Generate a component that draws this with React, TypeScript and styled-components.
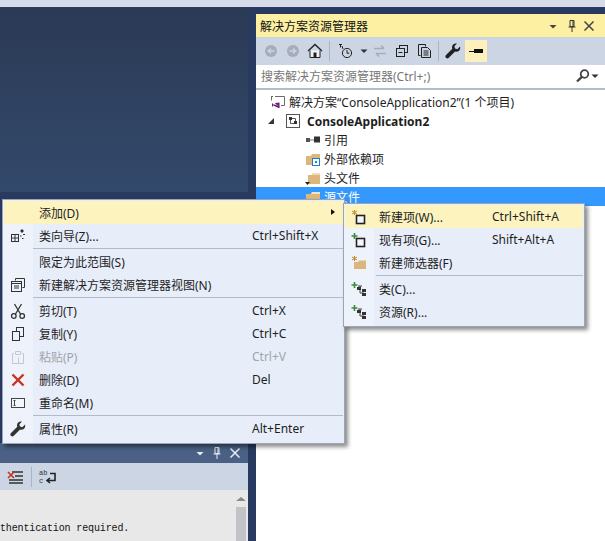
import React from "react";
import styled, { createGlobalStyle } from "styled-components";

const Global = createGlobalStyle`
  html, body { margin: 0; padding: 0; width: 605px; height: 541px; overflow: hidden; background: #2b3b60; }
  * { box-sizing: border-box; }
  #root { width: 605px; height: 541px; }
`;

const FONT = `"Noto Sans", "Noto Sans CJK SC", sans-serif`;

const Page = styled.div`
  position: relative;
  width: 605px;
  height: 541px;
  display: flex;
  flex-direction: column;
  font-family: ${FONT};
  font-size: 12px;
  color: #1e1e1e;
  overflow: hidden;
`;
const TopStrip = styled.div`
  height: 7px;
  flex: none;
  background: #d6dbe9;
`;
const Workspace = styled.div`
  flex: 1;
  display: flex;
  min-height: 0;
  background: #293a60;
`;
const LeftColumn = styled.div`
  width: 248px;
  margin-right: 8px;
  flex: none;
  display: flex;
  flex-direction: column;
`;
const DocArea = styled.div`
  height: 185px;
  flex: none;
  background: linear-gradient(#2b3a55, #33496b);
`;
const OutputPanel = styled.div`
  margin-top: 251px;
  flex: 1;
  display: flex;
  flex-direction: column;
  min-height: 0;
`;
const OutputTitle = styled.div`
  height: 20px;
  flex: none;
  background: #4a6185;
  display: flex;
  align-items: center;
  justify-content: flex-end;
  gap: 7px;
  padding-right: 7px;
`;
const OutputToolbar = styled.div`
  height: 27px;
  flex: none;
  background: #ccd5e4;
  display: flex;
  align-items: center;
  padding-left: 6px;
  gap: 4px;
`;
const OutputBody = styled.div`
  flex: 1;
  background: #e8e8e8;
  display: flex;
  justify-content: space-between;
  padding-top: 30px;
  position: relative;
`;
const Log = styled.pre`
  margin: 2px 0 0;
  font-family: "Liberation Mono", monospace;
  font-size: 10px;
  letter-spacing: -0.13px;
  line-height: 14px;
  color: #111;
`;
const ScrollTrack = styled.div`
  position: absolute;
  right: 0;
  top: 0;
  bottom: 0;
  width: 14px;
  display: flex;
  flex-direction: column;
  align-items: center;
  padding-top: 7px;
  gap: 6px;
`;
const ScrollUp = styled.div`
  width: 0;
  height: 0;
  border-left: 5px solid transparent;
  border-right: 5px solid transparent;
  border-bottom: 4px solid #8a8a8a;
`;
const ScrollThumb = styled.div`
  width: 10px;
  flex: 1;
  background: #c2c3c9;
`;
const Explorer = styled.div`
  flex: 1;
  display: flex;
  flex-direction: column;
  margin-top: 7px;
  background: #fff;
`;
const ExplorerTitle = styled.div`
  height: 23px;
  flex: none;
  background: #fdf0a3;
  display: flex;
  align-items: center;
  padding: 0 10px 0 4px;
  font-size: 12px;
  color: #111;
`;
const TitleText = styled.span`
  flex: 1;
`;
const TitleButtons = styled.div`
  display: flex;
  align-items: center;
  gap: 6px;
`;
const TitleCaret = styled.div`
  display: flex;
  margin-right: 3px;
`;
const ExplorerToolbar = styled.div`
  height: 28px;
  flex: none;
  background: #ccd5e4;
  display: flex;
  align-items: center;
  padding-left: 4px;
`;
const ToolButton = styled.div<{ $on?: boolean; $w?: number }>`
  width: ${(p) => p.$w ?? 22}px;
  height: 22px;
  flex: none;
  display: flex;
  align-items: center;
  justify-content: center;
  background: ${(p) => (p.$on ? "#fdf0bd" : "transparent")};
  margin-left: ${(p) => (p.$on ? 1 : 0)}px;
`;
const ToolSep = styled.div`
  width: 1px;
  height: 20px;
  flex: none;
  margin: 0 3px;
  background: #aab3c6;
`;
const SearchBox = styled.div`
  height: 25px;
  flex: none;
  background: #fff;
  border-bottom: 2px solid #b4bccf;
  display: flex;
  align-items: center;
  padding: 0 6px 2px 5px;
  color: #777;
  font-size: 12px;
`;
const SearchText = styled.span`
  flex: 1;
`;
const Tree = styled.div`
  padding-top: 2px;
  display: flex;
  flex-direction: column;
`;
const TreeRow = styled.div<{ $indent: number; $sel?: boolean; $bold?: boolean; $gap?: number }>`
  height: 19px;
  display: flex;
  align-items: center;
  gap: ${(p) => p.$gap ?? 3}px;
  padding-left: ${(p) => p.$indent}px;
  padding-top: ${(p) => (p.$bold ? 1 : 0)}px;
  background: ${(p) => (p.$sel ? "#3399ff" : "transparent")};
  color: ${(p) => (p.$sel ? "#fff" : "#1e1e1e")};
  font-weight: ${(p) => (p.$bold ? 700 : 400)};
  white-space: nowrap;
`;
const Expander = styled.div`
  width: 0;
  height: 0;
  margin-right: 5px;
  border-left: 6px solid transparent;
  border-bottom: 6px solid #333;
`;

const Menu = styled.div<{ $left: number; $top: number; $width: number }>`
  position: absolute;
  left: ${(p) => p.$left}px;
  top: ${(p) => p.$top}px;
  width: ${(p) => p.$width}px;
  background: linear-gradient(90deg, #eef2fb 30px, #e8edfa 30px);
  border: 1px solid #9aa5b8;
  padding: 1px 1px 3px;
  box-shadow: 3px 3px 4px rgba(0, 0, 0, 0.45);
  display: flex;
  flex-direction: column;
`;
const MenuRow = styled.div<{ $hot?: boolean; $off?: boolean; $col: number }>`
  position: relative;
  height: 23px;
  flex: none;
  display: grid;
  grid-template-columns: ${(p) => p.$col}px 1fr 91px;
  align-items: center;
  background: ${(p) => (p.$hot ? "#fdf3bf" : "transparent")};
  color: ${(p) => (p.$off ? "#a2a4a8" : "#1e1e1e")};
  white-space: nowrap;
`;
const MenuIcon = styled.div`
  display: flex;
  align-items: center;
  justify-content: center;
  width: 28px;
  height: 23px;
`;
const MenuSep = styled.div<{ $start: number }>`
  height: 1px;
  margin: 1px 0 1px ${(p) => p.$start}px;
  background: #b3bac8;
`;
const SubArrow = styled.div`
  position: absolute;
  right: 8px;
  top: 8px;
  width: 0;
  height: 0;
  border-top: 3.5px solid transparent;
  border-bottom: 3.5px solid transparent;
  border-left: 4px solid #111;
`;

const Svg = ({ children, w = 16, h = 16 }: { children: React.ReactNode; w?: number; h?: number }) => (
  <svg width={w} height={h} viewBox={`0 0 ${w} ${h}`} fill="none" style={{ flex: "none" }}>
    {children}
  </svg>
);

const PinDrop = ({ c }: { c: string }) => (
  <Svg w={10} h={10}><path d="M1.5 4h7L5 7.5z" fill={c} /></Svg>
);
const Pin = ({ c }: { c: string }) => (
  <Svg w={10} h={14}><path d="M3 1.5h4v6H3zM1.5 8h7M5 8v5M6 2v5" stroke={c} /></Svg>
);
const Close = ({ c }: { c: string }) => (
  <Svg w={12} h={12}><path d="M1.5 1.5l9 9M10.5 1.5l-9 9" stroke={c} strokeWidth="1.5" /></Svg>
);

const Nav = ({ dir }: { dir: 1 | -1 }) => (
  <Svg>
    <circle cx="8" cy="8" r="6" fill="#a6acb8" />
    <path d={dir < 0 ? "M11.5 8h-6M8 5.5L5.2 8 8 10.5" : "M4.5 8h6M8 5.5L10.8 8 8 10.5"} stroke="#ccd5e4" strokeWidth="1.4" />
  </Svg>
);
const Home = () => (
  <Svg>
    <path d="M1 8l7-6.5L15 8" stroke="#222" strokeWidth="1.4" />
    <path d="M3 7.5V14.5H13V7.5" fill="#f4f4f4" stroke="#222" />
    <rect x="6.5" y="9.5" width="3" height="5" fill="#222" />
  </Svg>
);
const History = () => (
  <Svg>
    <path d="M1 1.5h3M2.5 1.5v3" stroke="#222" />
    <path d="M4 3l1 3" stroke="#222" />
    <circle cx="9" cy="10" r="4.6" stroke="#222" />
    <path d="M9 7v3.2h2.4" stroke="#222" />
  </Svg>
);
const Caret = () => (
  <Svg w={8} h={8}><path d="M0.5 2.5h7L4 6z" fill="#333" /></Svg>
);
const Sync = () => (
  <Svg>
    <path d="M2 5.5h10M9 2.5l3 3M14 10.5H4M7 13.5l-3-3" stroke="#a6acb8" strokeWidth="1.5" />
  </Svg>
);
const Collapse = () => (
  <Svg>
    <rect x="5.5" y="2.5" width="8" height="7" stroke="#222" />
    <rect x="2.5" y="5.5" width="8" height="8" fill="#ccd5e4" stroke="#222" />
    <path d="M4.5 9.5h4" stroke="#222" />
  </Svg>
);
const Pages = () => (
  <Svg>
    <path d="M2.5 1.5h7v2M2.5 1.5v11h2" stroke="#222" />
    <path d="M5.5 4.5h6l3 3v7h-9z" fill="#ccd5e4" stroke="#222" />
    <path d="M7.5 8h5M7.5 10h5M7.5 12h5" stroke="#222" />
  </Svg>
);
const Wrench = ({ c = "#222" }: { c?: string }) => (
  <Svg>
    <path d="M15 3.6l-2.6 2.6-2.4-.6-.6-2.4L12 .6C9.6-.2 7 1.6 7 4.2c0 .6.1 1 .3 1.5L1 12c-.9.9-.9 2 0 2.8.8.9 2 .8 2.8 0l6.3-6.3c3 1 6-1.6 4.9-4.9z" fill={c} />
  </Svg>
);
const PinFlat = () => (
  <Svg>
    <path d="M1 8.5h5" stroke="#111" />
    <rect x="6" y="6" width="9" height="4" fill="#111" />
    <rect x="6" y="9" width="9" height="1" fill="#111" />
  </Svg>
);
const Lens = () => (
  <Svg>
    <circle cx="9.5" cy="6" r="3.8" stroke="#444" strokeWidth="1.8" />
    <path d="M6.8 8.8L2 13.5" stroke="#444" strokeWidth="2.4" />
  </Svg>
);
const Solution = () => (
  <Svg>
    <path d="M5 2.5h9.5v9H11" stroke="#6b6b6b" />
    <path d="M1 2.5h2" stroke="#6b6b6b" />
    <path d="M1.5 2.5v4" stroke="#6b6b6b" />
    <rect x="1" y="7" width="10" height="8" fill="#fff" />
    <path d="M2 9v4l2-2zM9.5 8.5v5L5 9.3v-.4z" fill="#68217a" />
    <path d="M4 11l5.5 2.5" stroke="#68217a" strokeWidth="1.4" />
  </Svg>
);
const Project = () => (
  <Svg>
    <rect x="1.5" y="1.5" width="13" height="13" fill="#fff" stroke="#555" />
    <rect x="4" y="4" width="3" height="3" fill="#333" />
    <rect x="9" y="8" width="3" height="3" fill="#333" />
    <path d="M5.5 7v3.5H9M7 5.5h3.5V8" stroke="#555" />
  </Svg>
);
const Refs = () => (
  <Svg>
    <rect x="1" y="6" width="4" height="4" fill="#555" />
    <rect x="9" y="4.5" width="6" height="6" fill="#333" />
    <path d="M5 8h4" stroke="#777" />
  </Svg>
);
const Folder = ({ sel }: { sel?: boolean }) => (
  <Svg>
    <path d="M1 5V14h14V3H7L6 5z" fill="#dcb67a" />
    <path d="M7 3h8v2H6z" fill={sel ? "#f4e3c4" : "#efdcb8"} />
  </Svg>
);
const FolderDown = () => (
  <Svg>
    <path d="M3 5V14h12V3H8L7 5z" fill="#dcb67a" />
    <path d="M8 3h7v2H7z" fill="#efdcb8" />
    <path d="M0 12h5L2.5 15z" fill="#222" />
  </Svg>
);
const ExtDeps = () => (
  <Svg>
    <path d="M1 5V14h8V7h6V3H7L6 5z" fill="#dcb67a" />
    <rect x="7.5" y="7.5" width="7" height="7" fill="#fff" stroke="#1c7cd6" />
    <rect x="10" y="10" width="2" height="2" fill="#1c7cd6" />
  </Svg>
);
const ClassWizard = () => (
  <Svg>
    <rect x="1.5" y="6.5" width="7" height="7" stroke="#333" />
    <path d="M1.5 10h7M5 6.5v7" stroke="#333" />
    <path d="M12 1l2 2-2 2-2-2z" fill="#333" />
    <path d="M10 8h1.5M13 6.5h2M12 10.5h1.5" stroke="#333" />
  </Svg>
);
const NewView = () => (
  <Svg>
    <path d="M5.5 3.5v-2h9v9h-2" stroke="#333" />
    <rect x="1.5" y="4.5" width="10" height="10" fill="#eef2fb" stroke="#333" />
    <path d="M1.5 6.5h10M4 9h5M4 11h5" stroke="#333" />
  </Svg>
);
const Scissors = () => (
  <Svg>
    <path d="M4.5 1l6 10M11.5 1l-6 10" stroke="#333" strokeWidth="1.3" />
    <circle cx="3.8" cy="13" r="2.3" stroke="#333" strokeWidth="1.3" />
    <circle cx="12.2" cy="13" r="2.3" stroke="#333" strokeWidth="1.3" />
  </Svg>
);
const Copy = () => (
  <Svg>
    <rect x="6.5" y="1.5" width="7" height="9" stroke="#333" />
    <rect x="2.5" y="5.5" width="7" height="9" fill="#eef2fb" stroke="#333" />
  </Svg>
);
const Paste = () => (
  <Svg>
    <path d="M4 4.5H2.5v10h11v-10H12M5.5 2.5h5v3h-5z" stroke="#c3c8d2" />
    <path d="M8.5 8.5v6" stroke="#c3c8d2" />
  </Svg>
);
const Delete = () => (
  <Svg>
    <path d="M2.5 2.5l11 11M13.5 2.5l-11 11" stroke="#c5341e" strokeWidth="2.4" />
  </Svg>
);
const Rename = () => (
  <Svg>
    <rect x="1.5" y="3.5" width="13" height="9" fill="#f4f6fb" stroke="#444" />
    <path d="M3.5 5.5h2M4.5 5.5v5M3.5 10.5h2" stroke="#444" />
  </Svg>
);
const NewItem = ({ add }: { add?: boolean }) => (
  <Svg>
    {add ? (
      <path d="M3.5 1v6M.5 4h6" stroke="#3a8a3a" strokeWidth="1.6" />
    ) : (
      <path d="M3.5 1v5M1 2l5 3M6 2L1 5" stroke="#c28a24" />
    )}
    <rect x="5.5" y="6.5" width="8" height="8" fill="#f4f6fb" stroke="#222" strokeWidth="1.6" />
  </Svg>
);
const NewFilter = () => (
  <Svg>
    <path d="M3.5 1v5M1 2l5 3M6 2L1 5" stroke="#c28a24" />
    <path d="M3 7h4l1-1.5h7V14H3z" fill="#dcb67a" />
  </Svg>
);
const AddClass = () => (
  <Svg>
    <path d="M3.5 1v6M.5 4h6" stroke="#3a8a3a" strokeWidth="1.6" />
    <path d="M7 5h4M9 5v7h4" stroke="#444" />
    <rect x="6" y="6" width="4" height="3" fill="#333" />
    <rect x="11" y="8" width="4" height="3" fill="#333" />
    <rect x="11" y="12" width="4" height="3" fill="#333" />
  </Svg>
);
const ClearX = () => (
  <Svg w={18}>
    <path d="M6 3h11M9 7h8M3 11h14M3 14h14" stroke="#333" strokeWidth="1.4" />
    <path d="M2 3l6 6M8 3L2 9" stroke="#c5341e" strokeWidth="1.6" />
  </Svg>
);
const WordWrap = () => (
  <Svg w={18}>
    <text x="0" y="6" fontSize="7" fontFamily="Liberation Mono, monospace" fill="#333">ab</text>
    <text x="0" y="14" fontSize="7" fontFamily="Liberation Mono, monospace" fill="#333">c</text>
    <path d="M11 4.5h5v7h-7M11 9l-3 2.5 3 2.5" stroke="#222" strokeWidth="1.6" />
  </Svg>
);

type Item = { icon?: React.ReactNode; label?: string; key?: string; hot?: boolean; off?: boolean; arrow?: boolean; sep?: boolean };

const mainItems: Item[] = [
  { label: "添加(D)", hot: true, arrow: true },
  { icon: <ClassWizard />, label: "类向导(Z)...", key: "Ctrl+Shift+X" },
  { sep: true },
  { label: "限定为此范围(S)" },
  { icon: <NewView />, label: "新建解决方案资源管理器视图(N)" },
  { sep: true },
  { icon: <Scissors />, label: "剪切(T)", key: "Ctrl+X" },
  { icon: <Copy />, label: "复制(Y)", key: "Ctrl+C" },
  { icon: <Paste />, label: "粘贴(P)", key: "Ctrl+V", off: true },
  { icon: <Delete />, label: "删除(D)", key: "Del" },
  { icon: <Rename />, label: "重命名(M)" },
  { sep: true },
  { icon: <Wrench c="#333" />, label: "属性(R)", key: "Alt+Enter" },
];

const subItems: Item[] = [
  { icon: <NewItem />, label: "新建项(W)...", key: "Ctrl+Shift+A", hot: true },
  { icon: <NewItem add />, label: "现有项(G)...", key: "Shift+Alt+A" },
  { icon: <NewFilter />, label: "新建筛选器(F)" },
  { sep: true },
  { icon: <AddClass />, label: "类(C)..." },
  { icon: <AddClass />, label: "资源(R)..." },
];

const MenuList = ({ items, col, sepStart }: { items: Item[]; col: number; sepStart: number }) => (
  <>
    {items.map((it, i) =>
      it.sep ? (
        <MenuSep key={i} $start={sepStart} />
      ) : (
        <MenuRow key={i} $hot={it.hot} $off={it.off} $col={col}>
          <MenuIcon>{it.icon}</MenuIcon>
          <span>{it.label}</span>
          <span>{it.key}</span>
          {it.arrow && <SubArrow />}
        </MenuRow>
      )
    )}
  </>
);

export default function App() {
  return (
    <Page>
      <Global />
      <TopStrip />
      <Workspace>
        <LeftColumn>
          <DocArea />
          <OutputPanel>
            <OutputTitle>
              <PinDrop c="#e8edf5" />
              <Pin c="#e8edf5" />
              <Close c="#e8edf5" />
            </OutputTitle>
            <OutputToolbar>
              <ClearX />
              <ToolSep />
              <WordWrap />
            </OutputToolbar>
            <OutputBody>
              <Log>thentication required.</Log>
              <ScrollTrack>
                <ScrollUp />
                <ScrollThumb />
              </ScrollTrack>
            </OutputBody>
          </OutputPanel>
        </LeftColumn>
        <Explorer>
          <ExplorerTitle>
            <TitleText>解决方案资源管理器</TitleText>
            <TitleButtons>
              <TitleCaret><PinDrop c="#444" /></TitleCaret>
              <Pin c="#333" />
              <Close c="#444" />
            </TitleButtons>
          </ExplorerTitle>
          <ExplorerToolbar>
            <ToolButton><Nav dir={-1} /></ToolButton>
            <ToolButton><Nav dir={1} /></ToolButton>
            <ToolButton><Home /></ToolButton>
            <ToolSep />
            <ToolButton $w={26}><History /></ToolButton>
            <ToolButton $w={10}><Caret /></ToolButton>
            <ToolButton><Sync /></ToolButton>
            <ToolButton><Collapse /></ToolButton>
            <ToolButton><Pages /></ToolButton>
            <ToolSep />
            <ToolButton><Wrench /></ToolButton>
            <ToolButton $on><PinFlat /></ToolButton>
          </ExplorerToolbar>
          <SearchBox>
            <SearchText>搜索解决方案资源管理器(Ctrl+;)</SearchText>
            <Lens />
            <Caret />
          </SearchBox>
          <Tree>
            <TreeRow $indent={14} $gap={3}><Solution />解决方案“ConsoleApplication2”(1 个项目)</TreeRow>
            <TreeRow $indent={12} $bold $gap={6}><Expander /><Project />ConsoleApplication2</TreeRow>
            <TreeRow $indent={49}><Refs />引用</TreeRow>
            <TreeRow $indent={49}><ExtDeps />外部依赖项</TreeRow>
            <TreeRow $indent={49}><FolderDown />头文件</TreeRow>
            <TreeRow $indent={49} $sel><Folder sel />源文件</TreeRow>
          </Tree>
        </Explorer>
      </Workspace>
      <Menu $left={2} $top={199} $width={343}>
        <MenuList items={mainItems} col={35} sepStart={29} />
      </Menu>
      <Menu $left={343} $top={203} $width={242}>
        <MenuList items={subItems} col={34} sepStart={31} />
      </Menu>
    </Page>
  );
}
